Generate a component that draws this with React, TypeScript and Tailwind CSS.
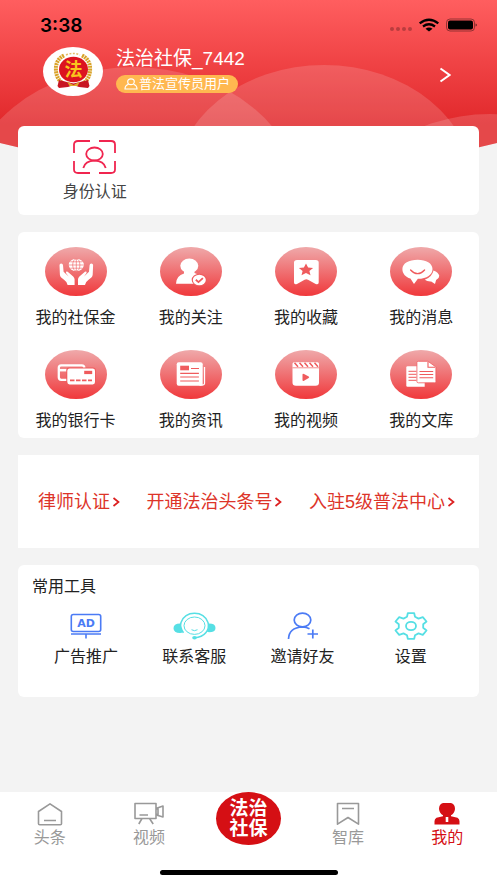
import type { ReactNode } from "react";

interface Entry {
  label: string;
  icon: ReactNode;
}

const RED = "#ef5b5d";

const Disc = ({ id, children }: { id: string; children: ReactNode }) => (
  <svg viewBox="0 0 62 49" className="h-[49px] w-[62px]" aria-hidden="true">
    <defs>
      <linearGradient id={id} x1="0" y1="0" x2="0" y2="1">
        <stop offset="0" stopColor="#efa9aa" />
        <stop offset="1" stopColor="#f0383b" />
      </linearGradient>
    </defs>
    <ellipse cx="31" cy="24.5" rx="31" ry="24.5" fill={`url(#${id})`} />
    {children}
  </svg>
);

const HAND =
  "M14.5 18.2q0-1.6 1.7-1.6t1.8 1.6l.6 6.6 5 4.8-2.6-3.6q-.3-2 1.7-1.3l5.5 4.8q1.4 1.4 1.4 3v5.4h-7q-.8-3.4-3.6-5.2l-2.8-2.2q-1.2-1-1.3-2.8z";

const services: Entry[] = [
  {
    label: "我的社保金",
    icon: (
      <Disc id="fund">
        <path d={HAND} fill="#fff" />
        <path d={HAND} fill="#fff" transform="translate(62.6 0) scale(-1 1)" />
        <ellipse cx="31.3" cy="18" rx="7.5" ry="6.2" fill="#fff" />
        <g fill="none" stroke={RED} strokeWidth=".6">
          <ellipse cx="31.3" cy="18" rx="3.6" ry="6.2" />
          <path d="M31.3 12v12M24 18h14.6M25.3 14.8h12M25.3 21.2h12" />
        </g>
      </Disc>
    ),
  },
  {
    label: "我的关注",
    icon: (
      <Disc id="follow">
        <ellipse cx="29.3" cy="18.8" rx="9" ry="7.3" fill="#fff" />
        <path d="M24 22h10.5v4q5.500 1.500 6 6v4.700H16q.3-8 8-10.200z" fill="#fff" />
        <ellipse cx="39.3" cy="33" rx="7.6" ry="6.3" fill={RED} />
        <ellipse cx="39.3" cy="33" rx="6.5" ry="5.2" fill="#fff" />
        <path d="M35.8 32.8l2.7 2.3 4.4-4" fill="none" stroke={RED} strokeWidth="1.8" />
      </Disc>
    ),
  },
  {
    label: "我的收藏",
    icon: (
      <Disc id="favorite">
        <path
          d="M22 13h18.7q3 0 3 2.500v20q0 2.600-3 1.500L33 32.700q-1.700-1-3.400 0L22 37q-3 1-3-1.500v-20q0-2.500 3-2.500z"
          fill="#fff"
        />
        <path d="M31 16.500l2.100 4 5 .5-3.700 2.900 1.100 4.300-4.500-2.200-4.500 2.200 1.100-4.300-3.700-2.900 5-.5z" fill={RED} />
      </Disc>
    ),
  },
  {
    label: "我的消息",
    icon: (
      <Disc id="message">
        <path
          d="M43.5 23.500q5 1.800 5.800 5.300.2 2.200-3.200 4.200l-1.100 4-3.800-2.600q-4 .2-6.400-1.600 7.500-3 8.700-9.300z"
          fill="#fff"
        />
        <path
          d="M27.7 12.700c8.500 0 14.800 3.600 14.800 9.200 0 5.700-5.500 9.700-14.600 9.900L24 37l-3.600-5.400c-5-1.700-8-5.200-8-9.700 0-5.600 6.500-9.200 15.300-9.200z"
          fill="#fff"
        />
        <path d="M20.6 23q7 7.400 14 0" fill="none" stroke={RED} strokeWidth="1.3" strokeLinecap="round" />
      </Disc>
    ),
  },
  {
    label: "我的银行卡",
    icon: (
      <Disc id="bank">
        <rect x="13.8" y="15.3" width="25.5" height="14.5" rx="2.5" fill="none" stroke="#fff" strokeWidth="2.3" />
        <path d="M13 20.200h10" stroke="#fff" strokeWidth="2.5" />
        <rect x="21.3" y="17.5" width="29.5" height="17.6" rx="2.8" fill={RED} />
        <rect x="22.3" y="18.4" width="27.7" height="16" rx="2.3" fill="#fff" />
        <path d="M39.2 20.800h8v3.300h-8z" fill={RED} />
        <path d="M25 30.300h22" stroke={RED} strokeWidth="1.8" strokeDasharray="4.5 1.5" />
      </Disc>
    ),
  },
  {
    label: "我的资讯",
    icon: (
      <Disc id="news">
        <path d="M44.5 17v16.500q0 1.500-2 1.500h-3" fill="none" stroke="#fff" strokeWidth="1.3" />
        <rect x="16.7" y="12.3" width="26" height="23.5" rx="2" fill="#fff" />
        <path d="M20.2 15.700h8.800v4.600h-8.800z" fill={RED} />
        <path d="M31 18.500h8M20.200 23.300h18.700M20.200 27h18.700M20.200 31h18.700" stroke={RED} strokeWidth="1.2" />
      </Disc>
    ),
  },
  {
    label: "我的视频",
    icon: (
      <Disc id="video">
        <path d="M19 12.300h23.500q1.500 0 1.500 1.500v19q0 3-3.500 3H21q-3.500 0-3.500-3v-19q0-1.500 1.500-1.500z" fill="#fff" />
        <path
          d="M19.5 12.800l3.500 4M24.500 12.800l3.500 4M29.500 12.800l3.500 4M34.500 12.800l3.500 4M39.500 12.800l3.500 4"
          stroke={RED}
          strokeWidth="1.5"
        />
        <path d="M17.5 17.800h26.500" stroke={RED} strokeWidth=".7" />
        <path d="M27.5 24.700q0-1.500 1.500-.7l4.700 2.600q1 .7 0 1.500L29 30.800q-1.500.7-1.500-.8z" fill={RED} />
      </Disc>
    ),
  },
  {
    label: "我的文库",
    icon: (
      <Disc id="library">
        <path d="M17.5 16.300h17.200v20.500H17.500q-1.200 0-1.200-1.200v-18q0-1.300 1.200-1.300z" fill="#fff" />
        <path d="M18.5 21.300h8M18.500 24.300h8M18.500 27.300h8M18.500 30.300h8" stroke={RED} strokeWidth="1" />
        <path
          d="M28.3 11.300H38l7.900 5.700v14.500q0 1.300-1.300 1.300H28.300q-1.400 0-1.400-1.300v-19q0-1.200 1.400-1.200z"
          fill="#fff"
          stroke={RED}
          strokeWidth=".8"
        />
        <path
          d="M38 12v5.300h7M29.500 21.500h13.700M29.500 24.500h13.700M29.500 27.800h13.700"
          fill="none"
          stroke={RED}
          strokeWidth="1.1"
        />
      </Disc>
    ),
  },
];

const tools: Entry[] = [
  {
    label: "广告推广",
    icon: (
      <svg viewBox="0 0 32 26" className="h-[26px] w-8" fill="none" stroke="#4b7bf5" strokeWidth="1.6" aria-hidden="true">
        <rect x="1.3" y="1.5" width="29.4" height="17" rx="2" />
        <path d="M1 21h30M16 21v4.500" />
        <text
          x="16"
          y="14"
          textAnchor="middle"
          fontSize="11"
          fontWeight="700"
          fontFamily="DejaVu Sans"
          fill="#4b7bf5"
          stroke="none"
        >
          AD
        </text>
      </svg>
    ),
  },
  {
    label: "联系客服",
    icon: (
      <svg viewBox="0 0 43 28" className="h-7 w-[43px]" fill="none" stroke="#56dfe4" aria-hidden="true">
        <path
          d="M7 11.500q-6.500 0-6.500 4.700t6.500 4.800q2 0 3-.8-2.800-4-1.800-8.700zM36 11.500q6.500 0 6.500 4.400T36 20.300l-2-.6q2-4 1-8.200z"
          fill="#56dfe4"
          stroke="none"
        />
        <path d="M10.500 20.700Q6.500 15 8 10.500 11.500 1.300 21.500 1.300T35 10.500q1.500 5.500-2 10-4 5-11.500 5.200" strokeWidth="1.5" />
        <ellipse cx="21.5" cy="13.7" rx="10.5" ry="8.7" strokeWidth="1" />
        <path d="M18.500 17.700q3 2 6 0" strokeWidth="1" />
        <ellipse cx="21.5" cy="25.7" rx="2.3" ry="1.7" fill="#56dfe4" stroke="none" />
      </svg>
    ),
  },
  {
    label: "邀请好友",
    icon: (
      <svg viewBox="0 0 32 28" className="h-7 w-8" fill="none" stroke="#4b7bf5" strokeWidth="1.7" aria-hidden="true">
        <ellipse cx="15.5" cy="8" rx="8.3" ry="6.8" />
        <path d="M1.500 27q.5-11.500 14-12 4 0 7 1.700M20.500 22h10.500M25.800 17.500v9" />
      </svg>
    ),
  },
  {
    label: "设置",
    icon: (
      <svg
        viewBox="0 0 34 28"
        className="h-7 w-[34px]"
        fill="none"
        stroke="#56dfe4"
        strokeWidth="1.8"
        strokeLinejoin="round"
        aria-hidden="true"
      >
        <path d="M13.800 1.200h6.400l.8 3.600 3.500 1.800 4.300-1.500 3.700 4.400-3.300 2.700v3.600l3.300 2.700-3.700 4.400-4.300-1.500-3.500 1.800-.8 3.600h-6.400l-.8-3.600-3.500-1.800-4.300 1.500-3.700-4.400 3.300-2.700v-3.600L1.500 9.500l3.700-4.400 4.300 1.500L13 4.800z" />
        <ellipse cx="17" cy="14" rx="5" ry="4.2" />
      </svg>
    ),
  },
];

const links = ["律师认证", "开通法治头条号", "入驻5级普法中心"];

const tabs: Entry[] = [
  {
    label: "头条",
    icon: (
      <svg
        viewBox="0 0 26 24"
        className="h-6 w-[26px]"
        fill="none"
        stroke="#999"
        strokeWidth="1.6"
        strokeLinejoin="round"
        aria-hidden="true"
      >
        <path d="M1.500 9.500L13 1.800l11.500 7.700v12.300q0 1-1.200 1H2.700q-1.200 0-1.200-1zM7 18.500h12" />
      </svg>
    ),
  },
  {
    label: "视频",
    icon: (
      <svg
        viewBox="0 0 30 24"
        className="h-6 w-[30px]"
        fill="none"
        stroke="#999"
        strokeWidth="1.6"
        strokeLinejoin="round"
        aria-hidden="true"
      >
        <path d="M1 1.500h21v15H1zM22 7l2-1.200L29 4v11l-5-1.500L22 12M24 5.800v7.700M5.500 13h8.500M8 16.500L4.800 22M15.500 16.500l3.700 5.500" />
      </svg>
    ),
  },
  { label: "法治社保", icon: null },
  {
    label: "智库",
    icon: (
      <svg
        viewBox="0 0 24 24"
        className="h-6 w-6"
        fill="none"
        stroke="#999"
        strokeWidth="1.6"
        strokeLinejoin="round"
        aria-hidden="true"
      >
        <path d="M1.500 1.500h21v20.700L12 15.500 1.500 22.200zM6 6.500h12" />
      </svg>
    ),
  },
  {
    label: "我的",
    icon: (
      <svg viewBox="0 0 26 24" className="h-6 w-[26px]" fill="#d50f14" aria-hidden="true">
        <path d="M9 1h8q4 1.200 4 6-.5 4.500-4 6.300v1l6.500 1.500q2 1 2 3.500v3.200H.5v-3.200q0-2.500 2-3.500l6.500-1.500v-1Q5.500 11.500 5 7q0-4.800 4-6z" />
        <path d="M11.700 15h2.600v5h-2.600z" fill="#fff" />
      </svg>
    ),
  },
];

const Backdrop = () => (
  <svg
    viewBox="0 0 497 180"
    preserveAspectRatio="none"
    className="absolute inset-x-0 top-0 h-[180px] w-full"
    aria-hidden="true"
  >
    <defs>
      <linearGradient id="sky" x1="0" y1="0" x2="0" y2="125" gradientUnits="userSpaceOnUse">
        <stop offset="0" stopColor="#ff5e5f" />
        <stop offset="1" stopColor="#e1282b" />
      </linearGradient>
      <clipPath id="bowl">
        <path d="M0 0h497v143Q248 206 0 143z" />
      </clipPath>
    </defs>
    <g clipPath="url(#bowl)">
      <path d="M0 0h497v180H0z" fill="url(#sky)" />
      <g fill="#fff" fillOpacity=".15">
        <ellipse cx="133" cy="204" rx="169" ry="137" />
        <ellipse cx="324" cy="187" rx="150" ry="122" />
        <ellipse cx="490" cy="239" rx="154" ry="125" />
      </g>
    </g>
  </svg>
);

const StatusBar = () => (
  <div className="flex h-[38px] items-end justify-between pr-5 pl-10">
    <span className="font-[Inter] text-[19px] leading-6 font-semibold text-black">3:38</span>
    <svg viewBox="0 0 90 16" className="mb-1 h-4 w-[90px]" aria-hidden="true">
      <g fill="#000" fillOpacity=".25">
        <circle cx="5" cy="11" r="2" />
        <circle cx="11" cy="11" r="2" />
        <circle cx="17" cy="11" r="2" />
        <circle cx="23" cy="11" r="2" />
      </g>
      <g fill="none" stroke="#000" strokeWidth="2.3">
        <path d="M32.700 5.400q9.300-7.200 18.600 0M36 8.500q6-4.400 12 0" />
      </g>
      <path d="M38.500 10.700q3.500-2.200 7 0L42 13.500z" />
      <rect x="59.5" y="1" width="28" height="12" rx="3.5" fill="none" stroke="#000" strokeOpacity=".4" />
      <rect x="61" y="2.5" width="25" height="9" rx="2" />
      <path d="M88.500 5.500q1.500.3 1.500 1.500t-1.500 1.500z" fillOpacity=".5" />
    </svg>
  </div>
);

const Avatar = () => (
  <svg viewBox="0 0 60 49" className="h-[49px] w-[60px]" role="img" aria-label="头像">
    <ellipse cx="30" cy="24.5" rx="30" ry="24.5" fill="#fff" />
    <path
      d="M21 8.500Q12 13 13 24t11 14M39 8.500Q48 13 47 24T36 38"
      fill="none"
      stroke="#d9a32a"
      strokeWidth="4"
      strokeDasharray="2 .7"
    />
    <path d="M23 8q7-3 14 0" fill="none" stroke="#e5bd6a" strokeWidth="1.5" strokeDasharray="2 1.5" />
    <ellipse cx="30.5" cy="22.5" rx="14.5" ry="12.8" fill="#dc1320" />
    <path d="M16 33l8 2 6.500 1.500L37 35l8-2 1.500 6-1.500 2-9-1-5.500-2-5.500 2-9 1-1.500-2z" fill="#c81622" />
    <path d="M24 34.500l6.500 3.500 6.500-3.500-2.500 4.500h-8z" fill="#e0a72c" />
    <text
      x="30.5"
      y="29"
      textAnchor="middle"
      fontSize="18"
      fontWeight="700"
      fontFamily="Noto Sans CJK SC"
      fill="#f9c51d"
    >
      法
    </text>
  </svg>
);

const Profile = () => (
  <div className="flex h-[88px] items-start pt-[9px] pr-[46px] pl-[43px]">
    <Avatar />
    <div className="ml-[13px] flex flex-col items-start">
      <h1 className="text-[19px] leading-6 text-white">法治社保_7442</h1>
      <span className="mt-1 flex h-[18px] items-center rounded-full bg-[#ffb850] px-2 text-[13px] text-white">
        <svg
          viewBox="0 0 14 12"
          className="mr-px h-3 w-[14px]"
          fill="none"
          stroke="#fff"
          strokeWidth="1.2"
          aria-hidden="true"
        >
          <ellipse cx="7" cy="3.7" rx="3.3" ry="2.9" />
          <path d="M4.500 6.300Q1 7.500 1 11h12q0-3.500-3.500-4.700" />
        </svg>
        普法宣传员用户
      </span>
    </div>
    <button type="button" aria-label="个人资料" className="mt-5 ml-auto">
      <svg viewBox="0 0 12 16" className="h-4 w-3" fill="none" stroke="#fff" strokeWidth="2" aria-hidden="true">
        <path d="M1.500 1.500L10.500 8l-9 6.500" />
      </svg>
    </button>
  </div>
);

const VerifyIcon = () => (
  <svg viewBox="0 0 43 34" className="h-[34px] w-[43px]" fill="none" stroke="#f0254f" strokeWidth="1.8" aria-hidden="true">
    <path d="M17 1H5Q1 1 1 4.500V13M26 1h12q4 0 4 3.500V13M17 33H5q-4 0-4-3.500V21M26 33h12q4 0 4-3.500V21" />
    <ellipse cx="21.5" cy="14" rx="8.3" ry="6.5" />
    <path d="M10.300 28q2-7.300 11.200-7.300T32.700 28" />
  </svg>
);

export default function App() {
  return (
    <div className="relative flex min-h-screen flex-col bg-[#f3f3f3] font-['Liberation_Sans','Noto_Sans_CJK_SC',sans-serif] text-[#222]">
      <Backdrop />
      <header className="relative">
        <StatusBar />
        <Profile />
      </header>

      <main className="relative flex flex-col gap-[17px] px-[18px]">
        <section className="flex h-[89px] rounded-md bg-white">
          <button type="button" className="flex w-1/3 flex-col items-center pt-[14px] text-base leading-6 text-[#444]">
            <VerifyIcon />
            <span className="mt-1.5">身份认证</span>
          </button>
        </section>

        <section className="grid grid-cols-4 gap-y-[18px] rounded-md bg-white pt-[15px] pb-[3px]">
          {services.map((item) => (
            <button key={item.label} type="button" className="flex flex-col items-center gap-2 text-base leading-7">
              {item.icon}
              <span>{item.label}</span>
            </button>
          ))}
        </section>

        <section className="flex h-[93px] items-center justify-between bg-white pr-6 pl-5 text-[#dd3429]">
          {links.map((text) => (
            <a key={text} href="#" className="flex items-center gap-0.5 text-lg leading-6 whitespace-nowrap">
              {text}
              <svg
                viewBox="0 0 8 10"
                className="h-[10px] w-2"
                fill="none"
                stroke="#dc1f1f"
                strokeWidth="1.7"
                aria-hidden="true"
              >
                <path d="M1.500 1L6.500 5l-5 4" />
              </svg>
            </a>
          ))}
        </section>

        <section className="h-[132px] rounded-md bg-white px-[14px] pt-[10px]">
          <h2 className="text-base leading-6">常用工具</h2>
          <div className="mt-3 grid grid-cols-4">
            {tools.map((item) => (
              <button key={item.label} type="button" className="flex flex-col items-center gap-1 text-base leading-6">
                <span className="flex h-[30px] items-center">{item.icon}</span>
                <span>{item.label}</span>
              </button>
            ))}
          </div>
        </section>
      </main>

      <footer className="relative mt-auto h-[91px] bg-white">
        <nav className="grid grid-cols-5">
          {tabs.map((tab) =>
            tab.icon ? (
              <a
                key={tab.label}
                href="#"
                className={`flex flex-col items-center pt-[10px] text-base leading-6 ${
                  tab.label === "我的" ? "text-[#d50f14]" : "text-[#999]"
                }`}
              >
                {tab.icon}
                <span>{tab.label}</span>
              </a>
            ) : (
              <a key={tab.label} href="#" className="flex justify-center">
                <span className="flex h-[53px] w-[65px] flex-col items-center justify-center rounded-[50%] bg-[#d50f14] text-[19px] leading-5 font-bold text-white">
                  <span>法治</span>
                  <span>社保</span>
                </span>
              </a>
            )
          )}
        </nav>
        <div className="absolute inset-x-0 bottom-2 mx-auto h-[5px] w-[178px] rounded-full bg-black" />
      </footer>
    </div>
  );
}
